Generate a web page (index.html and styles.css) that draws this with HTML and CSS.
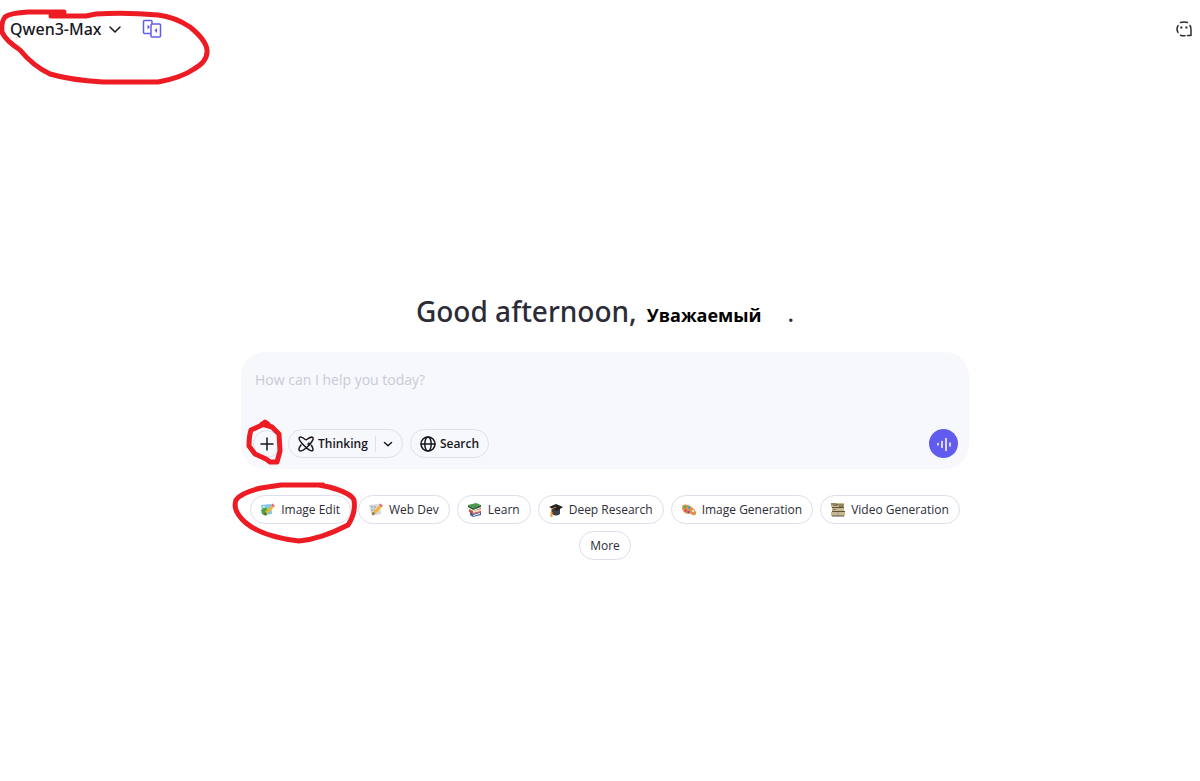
FILE: index.html
```html
<!DOCTYPE html>
<html lang="en">
<head>
<meta charset="utf-8">
<meta name="viewport" content="width=device-width, initial-scale=1">
<title>Qwen3-Max</title>
<link rel="stylesheet" href="styles.css">
</head>
<body>
<header class="topbar">
  <button class="model" type="button">Qwen3-Max
    <svg width="14" height="14" viewBox="0 0 14 14" class="line"><path d="M2 5l5 5 5-5"/></svg>
  </button>
  <button class="compare" type="button" aria-label="Compare models">
    <svg width="20" height="20" viewBox="0 0 20 20" class="line"><path d="M8 14.500H2.500Q1.500 14.500 1.500 13.500V2.500Q1.500 1.500 2.500 1.500H9Q10 1.500 10 2.500V4.500"/><rect x="9" y="5" width="9.500" height="13" rx="1"/><path class="solid" d="M5.500 5.500l2.500 2.500-2.500 2.500zM15 9v5l-2.500-2.500z"/></svg>
  </button>
  <button class="temp" type="button" aria-label="Temporary chat">
    <svg width="18" height="18" viewBox="0 0 18 18" class="line"><path d="M5.500 2.500Q9 1.500 12.500 2.500M3 5.500Q1 9 3 12.500M15 5.500Q16.200 7.500 16 10V15.500H12.500M5.500 15.200Q7.500 16 10 15.700"/><path class="dots" d="M5.300 7.500h2M10.400 7.500h2"/></svg>
  </button>
</header>
<main class="home">
  <h1 class="greeting">Good afternoon, <span class="name">Уважаемый</span><span class="stop">.</span></h1>
  <form class="composer">
    <input class="prompt" type="text" aria-label="Message" placeholder="How can I help you today?">
    <div class="tools">
      <span class="marked">
        <button class="round" type="button" aria-label="Add"><svg width="16" height="16" viewBox="0 0 16 16" class="line"><path d="M8 2v12M2 8h12"/></svg></button>
        <svg class="mark mark-add" width="40" height="48" viewBox="243 417 40 48"><path d="M268 423L265 421L262 424L251 429Q249 435 249 445L255 453L266 458L270 461H277L280 450L279 433L272 426L262 423"/></svg>
      </span>
      <div class="pill thinking">
        <button class="plain" type="button"><svg width="16" height="16" viewBox="0 0 16 16" class="line"><path d="M8.500 3.800C11.300 1.400 14 .7 14.800 1.500C16 2.800 13.600 7 9.500 10.800C6 14 2.600 15.700 1.400 14.500C.5 13.600 1.200 11.400 3 9M13.500 9.500C15 12 15.500 13.700 14.700 14.500C13.400 15.700 9.500 13.300 6 9.500C2.500 5.900.2 2.700 1.400 1.500C2.400.6 4.800 1.500 7.300 3.500"/><path class="solid" d="M11 5.500l.7 1.800 1.800.7-1.800.7-.7 1.800-.7-1.800L8.500 8l1.800-.7z"/></svg>Thinking</button>
        <button class="more-modes" type="button" aria-label="Thinking options"><svg width="10" height="10" viewBox="0 0 10 10" class="line"><path d="M1.500 3.500L5 6.800l3.500-3.300"/></svg></button>
      </div>
      <button class="pill search" type="button"><svg width="16" height="16" viewBox="0 0 16 16" class="line"><circle cx="8" cy="8" r="7"/><ellipse cx="8" cy="8" rx="3.200" ry="7"/><path d="M1 8h14"/></svg>Search</button>
      <button class="voice" type="button" aria-label="Voice"><svg width="16" height="16" viewBox="0 0 16 16" class="line"><path d="M2 7.500v1.500M6 5.500v6M10 2.500v12M14 7v3"/></svg></button>
    </div>
  </form>
  <div class="chips">
    <span class="marked">
      <button class="chip" type="button"><svg width="14" height="14" viewBox="0 0 14 14"><path fill="#7bc9ec" d="M0 2l10-1 1 10-9 1z"/><path fill="#46a847" d="M0 7l4-3 4 4-3 5-4-2z"/><circle cx="3" cy="4" r="1" fill="#fff3a0"/><path fill="#f4b52c" d="M4 9l7-7 2 2-7 7z"/><path fill="#e6657c" d="M10 2l1.500-1.500L14 3l-1.500 1z"/><path fill="#755334" d="M4 9l2 2-3 1z"/></svg>Image Edit</button>
      <svg class="mark mark-edit" width="128" height="64" viewBox="230 480 128 64"><path d="M322 484H280L260 487Q239 492 235 499Q231 510 245 522Q262 536 298 540Q320 538 347 524Q355 512 353 499Q350 492 328 486L318 484"/></svg>
    </span>
    <button class="chip" type="button"><svg width="14" height="14" viewBox="0 0 14 14"><path fill="#d6d8dd" d="M0 2l11-1 1 10-9 2z"/><path stroke="#8d9097" stroke-dasharray="2 1" d="M2 4h6M2 7h4M3 10h3"/><path fill="#f4b52c" d="M4 9l7-7 2 2-7 7z"/><path fill="#e6657c" d="M10 2l1.500-1.500L14 3l-1.500 1z"/><path fill="#755334" d="M4 9l2 2-3 1z"/></svg>Web Dev</button>
    <button class="chip" type="button"><svg width="14" height="14" viewBox="0 0 14 14"><path fill="#4b9a4c" d="M0 2l8-2 5 2-8 3z"/><path fill="#275f31" d="M0 2l5 3 8-3v2L5 7 0 4z"/><path fill="#d94a3f" d="M1 6l4 2 8-3v4l-8 2-4-2z"/><path fill="#f2dfcd" d="M5 8l8-2v2l-8 2z"/><path fill="#455a91" d="M2 9l3 2 8-2v3l-8 2-3-2z"/><path stroke="#fff" d="M5 12.500l7-2"/></svg>Learn</button>
    <button class="chip" type="button"><svg width="14" height="14" viewBox="0 0 14 14"><path fill="#3d4045" d="M3 6h8v5q-4 3-8 0z"/><path fill="#202226" d="M0 4l7-3 7 3-6 4z"/><path fill="none" stroke="#d68c27" d="M7 4L2.500 6v6"/><path fill="#e7a13b" d="M1.500 9h2v5h-2z"/></svg>Deep Research</button>
    <button class="chip" type="button"><svg width="14" height="14" viewBox="0 0 14 14"><path fill="#df9348" d="M1 2q5-2 10 3 5 5 2 7-2 1-4-1-1-1-3 0Q3 11 1 8-1 4 1 2z"/><circle cx="3" cy="4" r="1.300" fill="#4aac58"/><circle cx="7" cy="4.500" r="1.300" fill="#36a5df"/><circle cx="3.500" cy="7.500" r="1.200" fill="#dd4153"/><circle cx="6.500" cy="9" r="1.200" fill="#8c43c3"/><circle cx="11" cy="8" r="1" fill="#fff"/></svg>Image Generation</button>
    <button class="chip" type="button"><svg width="14" height="14" viewBox="0 0 14 14"><path fill="#c9b78f" d="M0 0h13v4H0zM1 5h12v3H1zM0 9h6v4H0zM8 9h6v4H8z"/><path fill="none" stroke="#5d523c" d="M0 1h5l2 1h6M1 4.500h12M1 8.500h13M7 8v5M1 13h12"/><path fill="#877956" d="M2 2h4v1H2zM8 3h4v1H8zM2 6h3v1H2z"/></svg>Video Generation</button>
    <button class="chip" type="button">More</button>
  </div>
</main>
<svg class="mark mark-model" width="212" height="90" viewBox="0 0 212 90"><path d="M64 12H28Q10 13 5 17Q1 22 2 32Q5 40 20 50Q33 66 50 74Q70 80 103 82H158Q181 78 194 69Q208 61 207 50Q206 40 190 27Q175 17 158 15Q125 12 96 14L86 16H51"/></svg>
</body>
</html>
```
FILE: styles.css
```css
* { box-sizing: border-box; }
body {
  margin: 0;
  min-height: 100vh;
  background: #fff;
  color: #2c2c36;
  font-family: "Open Sans", sans-serif;
}
button {
  display: inline-flex;
  align-items: center;
  margin: 0;
  padding: 0;
  border: 0;
  background: none;
  color: inherit;
  font: inherit;
  white-space: nowrap;
}
svg { display: block; flex: none; }
.line { fill: none; stroke: currentColor; stroke-width: 1.5; stroke-linecap: round; stroke-linejoin: round; }
.solid { fill: currentColor; stroke: none; }
.dots { stroke-width: 2; stroke-linecap: butt; }
.topbar { display: flex; align-items: center; height: 58px; padding: 0 7px 0 10px; }
.model { gap: 6px; color: #17171c; font: 500 16px/24px "Noto Sans", sans-serif; }
.compare { margin-left: 20px; color: #615ced; }
.temp { margin-left: auto; }
.home { max-width: 738px; margin: 231px auto 0; padding-left: 10px; }
.greeting { display: flex; align-items: baseline; justify-content: center; margin: 0 0 15px; font: 500 28px/44px "Noto Sans", sans-serif; }
.name { margin-left: 10px; color: #000; font-family: "Open Sans", sans-serif; font-size: 18px; font-weight: 700; }
.stop { margin-left: 26px; font-size: 24px; }
.composer { padding: 14px 11px 11px 12px; border-radius: 24px; background: #f7f8fc; }
.prompt { display: block; width: 100%; height: 28px; padding: 0 2px; border: 0; outline: 0; background: none; color: #2c2c36; font: 14px/28px "Open Sans", sans-serif; }
.prompt::placeholder { color: #c8cad9; opacity: 1; }
.tools { display: flex; align-items: center; margin-top: 35px; }
.marked { display: flex; position: relative; }
.round { width: 28px; height: 28px; justify-content: center; border: 1px solid #dddfea; border-radius: 14px; color: #17171c; }
.pill { display: flex; align-items: center; height: 29px; margin-left: 7px; padding: 0 9px; border: 1px solid #dddfea; border-radius: 15px; color: #17171c; font: 600 12px/20px "Open Sans", sans-serif; }
.plain, .search { gap: 4px; }
.more-modes { height: 16px; margin-left: 7px; padding-left: 7px; border-left: 1px solid #dddfea; }
.voice { width: 29px; height: 29px; margin-left: auto; justify-content: center; border-radius: 50%; background: #615ced; color: #fff; }
.chips { display: flex; flex-wrap: wrap; justify-content: center; gap: 7px; margin-top: 26px; }
.chip { gap: 6px; height: 29px; padding: 0 10px; border: 1px solid #dddfea; border-radius: 15px; font: 12px/20px "Open Sans", sans-serif; }
.mark { position: absolute; fill: none; stroke: #ed1c24; stroke-width: 5; stroke-linecap: round; stroke-linejoin: round; pointer-events: none; }
.mark-model { top: 0; left: 0; }
.mark-add { top: -12px; left: -10px; }
.mark-edit { top: -14px; left: -19px; }
```
